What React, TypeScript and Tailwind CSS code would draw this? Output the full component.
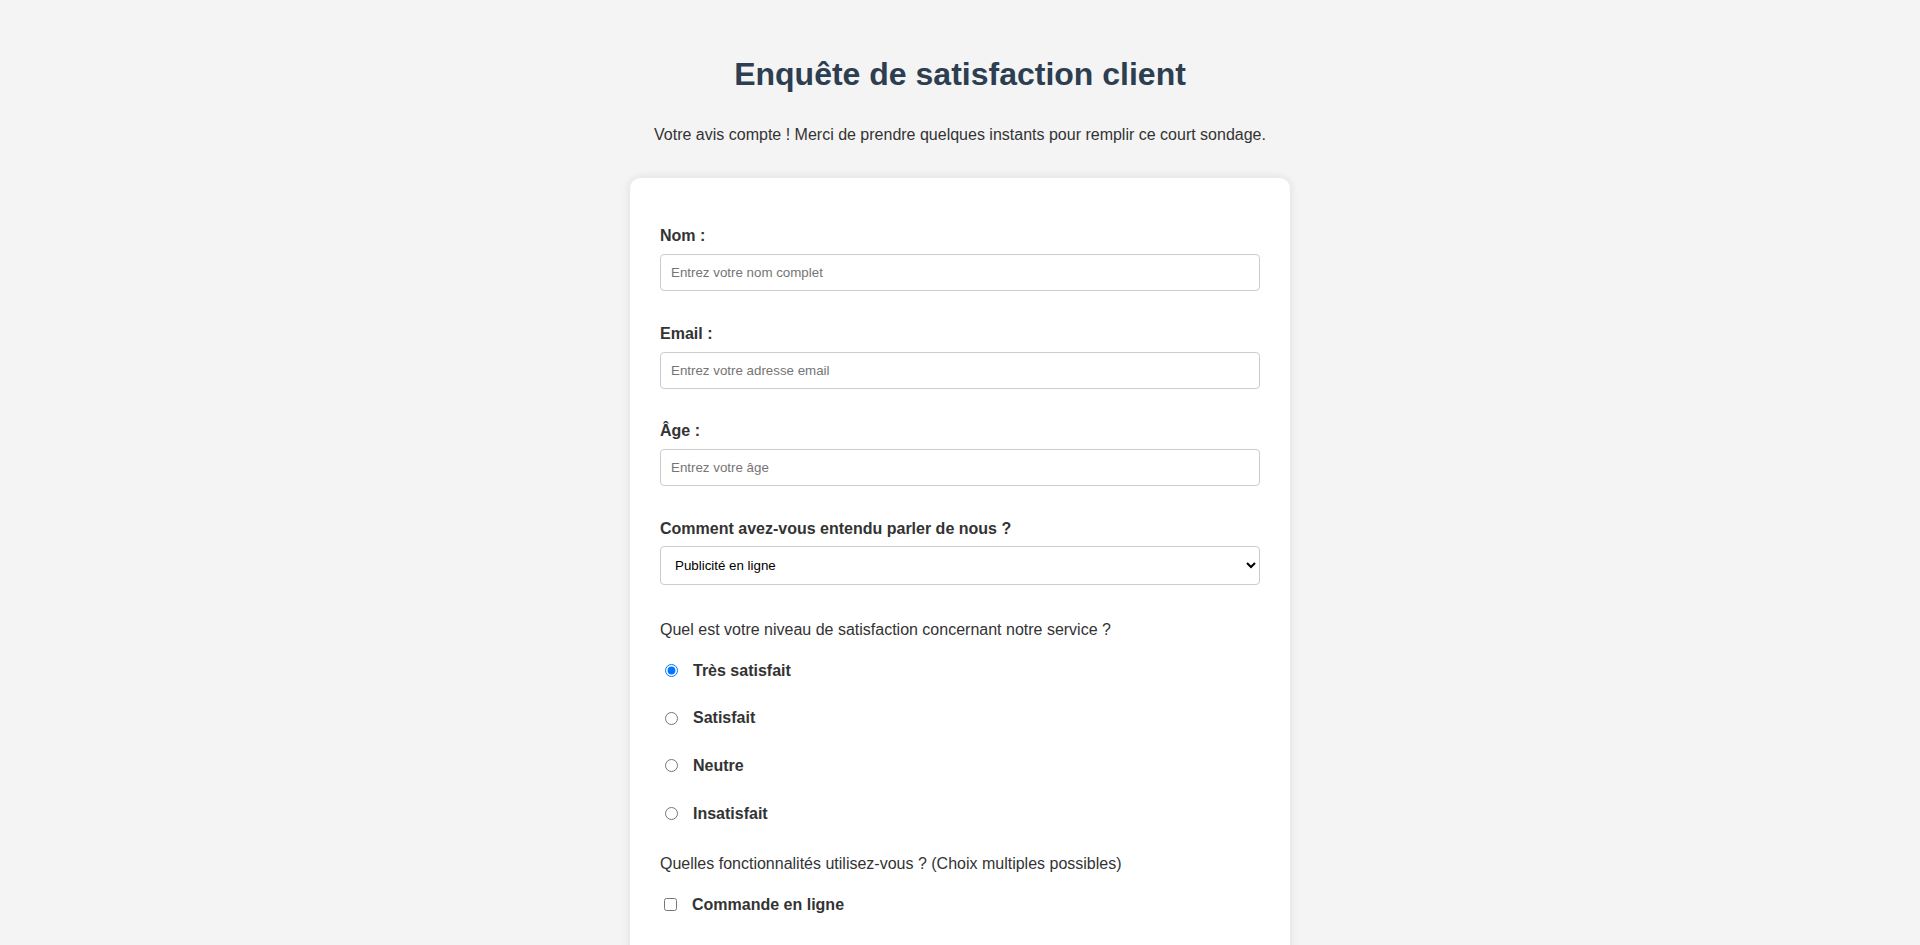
import { useState } from "react";

const satisfactionOptions = ["Très satisfait", "Satisfait", "Neutre", "Insatisfait"];
const features = ["Commande en ligne"];

function App() {
  const [satisfaction, setSatisfaction] = useState("Très satisfait");
  const [checked, setChecked] = useState<string[]>([]);

  const toggleFeature = (f: string) => {
    setChecked((prev) => (prev.includes(f) ? prev.filter((x) => x !== f) : [...prev, f]));
  };

  const inputClass =
    "block w-full h-[37px] px-[10px] border border-[#cccccc] rounded-[4px] bg-white text-[13.333px] text-black placeholder:text-[#757575] outline-none";

  return (
    <div className="min-h-screen bg-[#f4f4f4] text-[#333333] font-['Liberation_Sans',Arial,sans-serif] pt-[56px] pb-10">
      <h1 className="text-center text-[32px] leading-[normal] font-bold text-[#2c3e50]">
        Enquête de satisfaction client
      </h1>
      <p className="mt-[33px] text-center text-[16px] leading-[normal]">
        Votre avis compte ! Merci de prendre quelques instants pour remplir ce court sondage.
      </p>

      <form
        className="mx-auto mt-[34px] w-[660px] bg-white rounded-[10px] shadow-[0_0_10px_rgba(0,0,0,0.1)] px-[30px] pt-[49px] pb-[80px] text-[16px] leading-[normal]"
        onSubmit={(e) => e.preventDefault()}
      >
        <label className="block font-bold mb-[9px]">Nom :</label>
        <input type="text" className={inputClass + " mb-[33.6px]"} placeholder="Entrez votre nom complet" />

        <label className="block font-bold mb-[9px]">Email :</label>
        <input type="email" className={inputClass + " mb-[33.6px]"} placeholder="Entrez votre adresse email" />

        <label className="block font-bold mb-[9px]">Âge :</label>
        <input type="number" className={inputClass + " mb-[33.6px]"} placeholder="Entrez votre âge" />

        <label className="block font-bold mb-[8px]">Comment avez-vous entendu parler de nous ?</label>
        <select className="block w-full h-[39px] pl-[10px] pr-[2px] border border-[#cccccc] rounded-[4px] bg-white text-[13.333px] text-black mb-[36px]">
          <option>Publicité en ligne</option>
          <option>Réseaux sociaux</option>
          <option>Bouche à oreille</option>
          <option>Autre</option>
        </select>

        <p className="mb-[23px]">Quel est votre niveau de satisfaction concernant notre service ?</p>
        <div className="flex flex-col gap-[29.6px] mb-[32.5px]">
          {satisfactionOptions.map((opt) => (
            <label key={opt} className="flex items-center font-bold">
              <input
                type="radio"
                name="satisfaction"
                className="ml-[5px] mr-[15px] w-[13px] h-[13px]"
                checked={satisfaction === opt}
                onChange={() => setSatisfaction(opt)}
              />
              {opt}
            </label>
          ))}
        </div>

        <p className="mb-[23px]">Quelles fonctionnalités utilisez-vous ? (Choix multiples possibles)</p>
        <div className="flex flex-col gap-[29.6px]">
          {features.map((f) => (
            <label key={f} className="flex items-center font-bold">
              <input
                type="checkbox"
                className="ml-[4px] mr-[15px] w-[13px] h-[13px] -translate-y-[1px]"
                checked={checked.includes(f)}
                onChange={() => toggleFeature(f)}
              />
              {f}
            </label>
          ))}
        </div>
      </form>
    </div>
  );
}

export default App;
